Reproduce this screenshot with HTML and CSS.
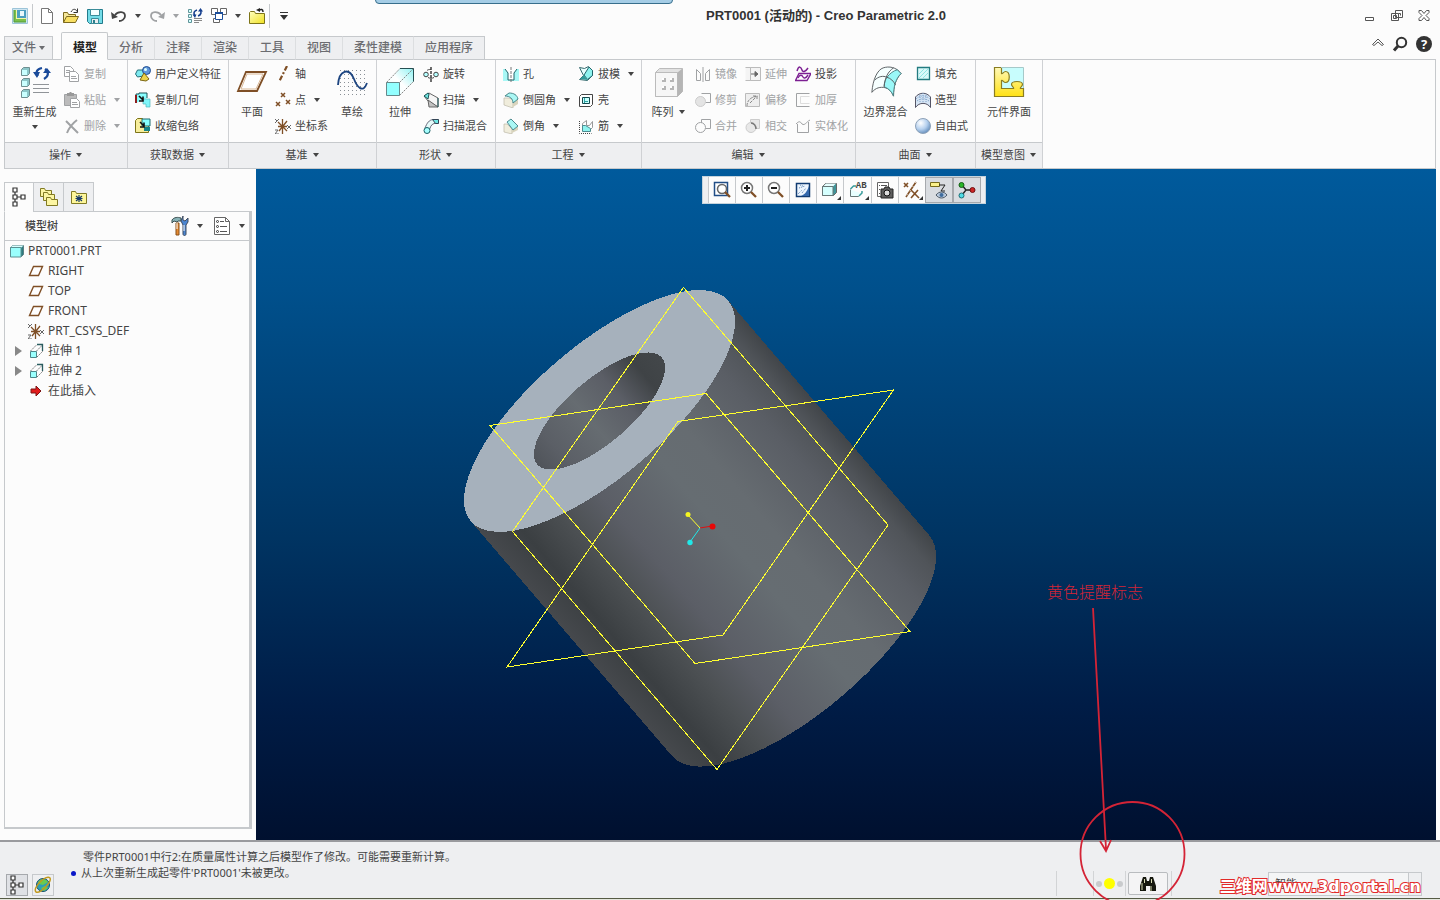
FILE: index.html
```html
<!DOCTYPE html>
<html lang="zh-CN">
<head>
<meta charset="utf-8">
<title>PRT0001 (活动的) - Creo Parametric 2.0</title>
<link rel="stylesheet" href="styles.css">
</head>
<body>
<svg class="sprite" aria-hidden="true">
  <defs>
    <linearGradient id="gFolder" x1="0" y1="0" x2="1" y2="1"><stop offset="0" stop-color="#ffffc0"/><stop offset="1" stop-color="#f0e020"/></linearGradient>
    <linearGradient id="gPuzzle" x1="0" y1="0" x2="0" y2="1"><stop offset="0" stop-color="#fff9b8"/><stop offset="1" stop-color="#ffe114"/></linearGradient>
    <linearGradient id="gFace" x1="0" y1="1" x2="1" y2="0"><stop offset="0" stop-color="#e6ffff"/><stop offset=".5" stop-color="#fff"/><stop offset="1" stop-color="#8ff3f3"/></linearGradient>
    <radialGradient id="gBall" cx=".35" cy=".3" r=".7"><stop offset="0" stop-color="#fff"/><stop offset=".6" stop-color="#b5d0ee"/><stop offset="1" stop-color="#6e96c2"/></radialGradient>
    <pattern id="dots" width="4" height="4" patternUnits="userSpaceOnUse"><rect width="1" height="1" fill="#8a9096"/></pattern>
  </defs>
  <symbol id="caret" viewBox="0 0 8 6"><path d="M1 1h6L4 5z" fill="currentColor"/></symbol>
  <symbol id="app" viewBox="0 0 16 16"><path d="M.5.5h15v15H.5z" fill="#cfe6f2" stroke="#9cc4d8"/><path d="M2 2h12v12H2z" fill="#7cc04a"/><path d="M4 2h10v9H4z" fill="#f2f5a8"/><path d="M5 2h9v8H5z" fill="#4a9fc0"/><path d="M8 3h4v5H8z" fill="#e8f8fc"/><path d="M2 2v12h12" fill="none" stroke="#4e9b3a"/></symbol>
  <symbol id="new" viewBox="0 0 16 16"><path d="M2.500.5h7l4 4v11h-11z" fill="#fff" stroke="#777"/><path d="M9.500.5v4h4" fill="none" stroke="#777"/></symbol>
  <symbol id="open" viewBox="0 0 16 16"><path d="M.5 14.500v-10h4l1 2h7v3" fill="#f5e79a" stroke="#7d6a1f"/><path d="M.5 14.500l3-6h12l-3 6z" fill="#f8df63" stroke="#7d6a1f"/><path d="M8 4c2-4 5-3 6-.500M14.500.5v4h-4" fill="none" stroke="#333"/></symbol>
  <symbol id="save" viewBox="0 0 16 16"><path d="M.5 1.500h15v14H2.500l-2-2z" fill="#74dce8" stroke="#217b8c"/><path d="M3.500 1.500h9v6h-9z" fill="#f5ffff" stroke="#3b8c99"/><path d="M4.500 10.500h7v5h-7z" fill="#e9eef0" stroke="#3b8c99"/><path d="M6 12h2v3H6z" fill="#2d7f8e"/></symbol>
  <symbol id="undo" viewBox="0 0 16 16"><path d="M4 7C7 3 14 3 14 8c0 3-3 5-6 5" fill="none" stroke="currentColor" stroke-width="1.800"/><path d="M0 4l1 7 6-2z" fill="currentColor"/></symbol>
  <symbol id="redo" viewBox="0 0 16 16"><path d="M12 7C9 3 2 3 2 8c0 3 3 5 6 5" fill="none" stroke="currentColor" stroke-width="1.800"/><path d="M16 4l-1 7-6-2z" fill="currentColor"/></symbol>
  <symbol id="regen" viewBox="0 0 16 16"><g fill="#d5ffff" stroke="#5f9499"><path d="M1.500 1.500h3v3h-3zM1.500 6.500h3v3h-3zM1.500 11.500h3v3h-3z"/></g><path d="M8 8c-2-3-1-5 2-6M13 2c2 2 1 5-2 6" fill="none" stroke="#17408f" stroke-width="1.600"/><path d="M5.500 6.500h4L8 10zM11 3.500h5L13.500 0z" fill="#17408f"/><path d="M7 10.500h8M7 12.500h8M7 14.500h5" stroke="#888"/></symbol>
  <symbol id="windows" viewBox="0 0 16 16"><g fill="#fff" stroke="#666"><path d="M.5.5h6v6h-6zM9.500.5h6v6h-6zM2.500 10.500h6v4h-6z"/></g><path d="M4.500 4.500h7v7h-7z" fill="#fff" stroke="#1b4d9a"/><path d="M4 4h8v2H4z" fill="#1b4d9a"/></symbol>
  <symbol id="folderback" viewBox="0 0 16 16"><path d="M.5 15.500v-11l1-1h4l1 2h9v10z" fill="url(#gFolder)" stroke="#7d7418"/><path d="M14 4c0-3-2-3-4-2" fill="none" stroke="#222" stroke-width="1.500"/><path d="M7 2l4-2v4z" fill="#222"/></symbol>
  <symbol id="more" viewBox="0 0 10 10"><path d="M1 1.500h8" stroke="#333"/><path d="M1 4h8L5 9z" fill="#333"/></symbol>

  <symbol id="regenBig" viewBox="0 0 32 32"><g id="cubes"><path d="M2.500 3.500l2-2h6v6l-2 2h-6z" fill="#8cc7c9" stroke="#6f8f91"/><path d="M3 4h5v5H3z" fill="#c9ffff"/></g><use href="#cubes" y="11"/><use href="#cubes" y="22"/><path d="M19 10c-3-4-1-7 4-8M26 3c4 3 4 7-1 10" fill="none" stroke="#1a4a99" stroke-width="2.200"/><path d="M14 6h7l-3 6zM24 7h8l-4-5z" fill="#1a4a99"/><path d="M14 18.500h16M14 22.500h16M14 26.500h16" stroke="#909498"/></symbol>
  <symbol id="copy" viewBox="0 0 16 16"><g fill="#fff" stroke="currentColor"><path d="M.5.500h6l3 3v7h-9z"/><path d="M5.500 5.500h6l3 3v7h-9z"/></g><path d="M2 4.500h4M2 6.500h3M7 10.500h5M7 12.500h6" stroke="currentColor"/></symbol>
  <symbol id="paste" viewBox="0 0 16 16"><path d="M.5 2.500h12v11H.5z" fill="#bbb" stroke="currentColor"/><path d="M3 1h2l1-1h1l1 1h2v3H3z" fill="#999"/><path d="M6.500 6.500h6l3 3v6h-9z" fill="#fff" stroke="currentColor"/><path d="M8 10.500h5M8 12.500h6" stroke="currentColor"/></symbol>
  <symbol id="delete" viewBox="0 0 16 16"><path d="M2 3l12 12M13 2C9 5 5 10 3 15" fill="none" stroke="currentColor" stroke-width="2"/></symbol>
  <symbol id="udf" viewBox="0 0 16 16"><path d="M.5 8l2-4h6l3 3-3 3-6 1z" fill="#7eeaf0" stroke="#236c77"/><circle cx="11.500" cy="4.500" r="4" fill="#5f97dc" stroke="#214e90"/><path d="M5 14l4-7 5 6-3 2z" fill="#ecd34a" stroke="#7a6613"/><circle cx="10.500" cy="3.500" r="1.500" fill="#dff"/></symbol>
  <symbol id="copygeom" viewBox="0 0 16 16"><path d="M1 11V2h3V1h8v5" fill="#8ff" stroke="#1f5558"/><path d="M1 3v8" stroke="#8e1d1d" stroke-width="2"/><path d="M8 7h7v8h-4v-3H8z" fill="#7ff6fa" stroke="#55b8bb" stroke-width=".7"/><path d="M4 4l4 4M8 4.500V9H4" fill="none" stroke="#111" stroke-width="1.600"/></symbol>
  <symbol id="shrink" viewBox="0 0 16 16"><path d="M.5 14.500v-12l2-2h5v6h6v8z" fill="#f7ee9b" stroke="#7d7418"/><path d="M7 1h8v7H7z" fill="#8ff" stroke="#1f6c70"/><path d="M9 9h6v4H9z" fill="#17848a"/><path d="M5 4l4 4M9 4.500V9H5" fill="none" stroke="#111" stroke-width="1.600"/></symbol>
  <symbol id="planeBig" viewBox="0 0 32 32"><path d="M10 6h20l-9 19H2z" fill="#fff" stroke="#7f4f26" stroke-width="1.800"/><path d="M11 8h16l-7 15H5z" fill="none" stroke="#d9b896"/></symbol>
  <symbol id="axis" viewBox="0 0 16 16"><path d="M12 0L4 16" stroke="#7f4f26" stroke-width="2.200" stroke-dasharray="5 2 2 2"/></symbol>
  <symbol id="points" viewBox="0 0 16 16"><path id="x" d="M6 1l4 4M10 1L6 5" stroke="#7f4f26" stroke-width="1.500"/><use href="#x" x="-5" y="9"/><use href="#x" x="5" y="7"/></symbol>
  <symbol id="csys" viewBox="0 0 16 16"><path d="M7.500 1v15M3 4l9 9M12 3l-8 10M3 8.500h9" stroke="#7f4f26" stroke-width="1.300"/><path d="M0 1l2 2 2-2M2 3L0 5M0 12h3l-3 4h4M12 7l4 4M16 7l-4 4" fill="none" stroke="#666"/></symbol>
  <symbol id="sketchBig" viewBox="0 0 32 32"><rect x="2" y="2" width="29" height="29" fill="url(#dots)"/><path d="M2 19C3 4 13 1 18 13c3 8 9 15 13 4" fill="none" stroke="#1c4480" stroke-width="1.800"/></symbol>
  <symbol id="extrudeBig" viewBox="0 0 32 32"><path d="M2.500 16.500L16 2.500h13.500v13l-14 14z" fill="url(#gFace)"/><path d="M2.500 16.500h13v13h-13z" fill="#92ffff" stroke="#66898b"/><path d="M2.500 16.500L16 2.500M15.500 16.500l14-14M15.500 29.500l14-14" stroke="#888" stroke-dasharray="2 1"/><path d="M16 2.500h13.500v13" fill="none" stroke="#254f52"/></symbol>
  <symbol id="revolve" viewBox="0 0 16 16"><path d="M8 1v15" stroke="#222" stroke-width="1.300" stroke-dasharray="3 1"/><circle cx="3" cy="8.500" r="2.300" fill="#b5ffff" stroke="#444"/><circle cx="13" cy="8.500" r="2.300" fill="#b5ffff" stroke="#444"/><path d="M4 4.500c1-1 2-1 4-1M5 11.500c2 1 4 1 6 0" fill="none" stroke="#444"/></symbol>
  <symbol id="sweep" viewBox="0 0 16 16"><path d="M1 4l4 5 10 6V6L6 1z" fill="#f5f5f5" stroke="#666"/><path d="M1 4l4-3 1 1-1 5z" fill="#6fe5e0" stroke="#1d5558"/><path d="M5 8l10 7H6z" fill="#c2c2c2" stroke="#666"/><path d="M15 6v9" stroke="#1d5558"/></symbol>
  <symbol id="sweepblend" viewBox="0 0 16 16"><path d="M2 10C4 5 6 2 10 1.500h5v4h-4c-3 1-4 4-5 8z" fill="#e6fbfa" stroke="#667"/><path d="M9.500 1.500h6v4h-3z" fill="#6fe9e5" stroke="#345"/><circle cx="4" cy="12.500" r="3" fill="#a6ffff" stroke="#175d63"/></symbol>
  <symbol id="hole" viewBox="0 0 16 16"><path d="M0 3h4l1 4v7h6V7l1-4h4v12H0z" fill="#a8f8f6"/><path d="M2 3l3 4v7h6V7l3-4" fill="#fff" stroke="#23646a"/><path d="M8 1v15" stroke="#777" stroke-dasharray="3 1"/></symbol>
  <symbol id="round" viewBox="0 0 16 16"><path d="M1 6v7l9 3v-6c0-3-2-4-5-4z" fill="#f0eddc" stroke="#bbb8a8" stroke-width=".7"/><path d="M10 15l5-3V7c-1-4-4-6-9-6L1 4c5 0 9 2 9 7z" fill="#d9d4bd"/><path d="M2 4l4-3c5 0 8 2 9 6l-5 4c0-4-3-7-8-7z" fill="#a9f7f4" stroke="#4c8a8f"/></symbol>
  <symbol id="chamfer" viewBox="0 0 16 16"><path d="M1 6v8l8 2v-5L4 6z" fill="#f0eddc" stroke="#bbb8a8" stroke-width=".7"/><path d="M9 15l6-3V8l-6 3z" fill="#d9d4bd"/><path d="M4 4l4-3 7 7-5 4z" fill="#a9f7f4" stroke="#4c8a8f"/></symbol>
  <symbol id="draft" viewBox="0 0 16 16"><path d="M1.500 1.500l5 1 4-2 4 4v5l-5 5-8-1 4-4z" fill="#e9ffff" stroke="#356a6e"/><path d="M6 9l5-8 3.500 3.500v5l-5 4z" fill="#8ef3ef" stroke="#23646a"/><path d="M2 13l4-4 3.500 5z" fill="#319c9a"/></symbol>
  <symbol id="shell" viewBox="0 0 16 16"><path d="M1.500 4.500l2-2h11v10l-2 2h-11z" fill="#fff" stroke="#444"/><path d="M4.500 5.500h7v6h-7z" fill="#c7fffc" stroke="#14494d"/><path d="M6 9.500h4M6.500 6v5" stroke="#2fa5a5"/></symbol>
  <symbol id="rib" viewBox="0 0 16 16"><path d="M4.500 12.500v-7l4-3v5h3l3-4v6l-4 4z" fill="#fff" stroke="#999"/><path d="M4.500 7.500h3l5 3v3h-8z" fill="#8ef3ef" stroke="#4c8a8f"/><path d="M1.500 3v12.500h12" fill="none" stroke="#444" stroke-dasharray="1 1"/></symbol>
  <symbol id="patternBig" viewBox="0 0 32 32"><path d="M2.500 6.500l4-4h23v23l-5 5h-22z" fill="#e2e2e2" stroke="#bbb"/><path d="M2.500 6.500h22v24h-22z" fill="#f6f6f6" stroke="#bbb"/><path d="M24.500 6.500l5-4v23l-5 5z" fill="#b5b5b5"/><path d="M9 12h4v4H9zM17 12h4v4h-4zM9 20h4v4H9zM17 20h4v4h-4z" fill="#b5b5b5"/><path d="M9 12h2v2H9zM17 12h2v2h-2zM9 20h2v2H9zM17 20h2v2h-2z" fill="#fff"/></symbol>
  <symbol id="mirror" viewBox="0 0 16 16"><path d="M8 1v15" stroke="currentColor"/><path d="M1.500 14.500v-11l4 4v7zM14.500 14.500v-11l-4 4v7z" fill="none" stroke="currentColor"/></symbol>
  <symbol id="trim" viewBox="0 0 16 16"><path d="M6.500 1.500h9v9h-5" fill="none" stroke="currentColor"/><circle cx="5.500" cy="9.500" r="5" fill="#e4e4e4" stroke="#ccc"/></symbol>
  <symbol id="merge" viewBox="0 0 16 16"><path d="M6.500 5v-3.500h9v9h-5" fill="none" stroke="currentColor"/><circle cx="5.500" cy="9.500" r="5" fill="none" stroke="currentColor"/></symbol>
  <symbol id="extend" viewBox="0 0 16 16"><path d="M.5 1.500h5v13h-5M5.500 1.500h10v13h-10z" fill="#f4f4f4" stroke="#bbb"/><path d="M6 8h6M10 5.500l3 2.500-3 2.500z" fill="#666" stroke="#666"/></symbol>
  <symbol id="offset" viewBox="0 0 16 16"><path d="M.5 1.500h14v13H.5z" fill="#eee" stroke="#bbb"/><path d="M2 14c0-5 3-9 11-10M5 11l6-6M8 4h4v4" fill="none" stroke="#888" stroke-dasharray="3 1"/></symbol>
  <symbol id="intersect" viewBox="0 0 16 16"><path d="M5.500 1.500h9v9h-9z" fill="#e8e8e8" stroke="#ccc"/><circle cx="6" cy="9.500" r="5" fill="#e8e8e8" stroke="#ccc"/><path d="M6 5c3 0 5 3 5 6" fill="none" stroke="#777" stroke-width="1.500"/></symbol>
  <symbol id="project" viewBox="0 0 16 16"><path d="M2 5c2-6 4-4 5-1s4 1 6-2" fill="none" stroke="#7c1f92" stroke-width="1.500"/><path d="M4 7.500h12l-4 7H.5z" fill="#fff" stroke="#7c1f92" stroke-width="1.400"/><path d="M3 12c2-4 4-3 5-1s3 1 5-2" fill="none" stroke="#7c1f92" stroke-width="1.400"/></symbol>
  <symbol id="thicken" viewBox="0 0 16 16"><path d="M14.500 1.500h-13v13h13" fill="none" stroke="currentColor"/><path d="M14.500 4.500h-9v7h9" fill="none" stroke="#ddd"/></symbol>
  <symbol id="solidify" viewBox="0 0 16 16"><path d="M1 6c3-3 4-3 6 0 3 2 4-2 8-4M2.500 6v8.500h11V4" fill="none" stroke="currentColor"/></symbol>
  <symbol id="boundaryBig" viewBox="0 0 34 34"><path d="M2 28C3 14 8 4 14 2c6-2 14-1 19 6-6 6-8 14-8 24-2-5-5-8-9-9-5-1-10 0-14 5z" fill="#f6ffff" stroke="#555b5e"/><path d="M18 12c3-4 7-7 11-8l4 4c-6 6-8 14-8 24-2-5-5-8-10-10 0-4 1-7 3-10z" fill="#9af8f8" stroke="#4b7f82"/><path d="M5 15c4-4 9-5 13-3 4 1 7 4 9 8M15 22C16 12 19 6 25 2" fill="none" stroke="#555b5e"/></symbol>
  <symbol id="fill" viewBox="0 0 16 16"><path d="M2.500 1.500h12v12h-12z" fill="#d9fafa" stroke="#237b80" stroke-width="1.300"/><path d="M4 12l9-9M4 8l5-5M8 12l5-5" stroke="#8fe5e4"/></symbol>
  <symbol id="style" viewBox="0 0 16 16"><path d="M.5 15.500V5c4-5 11-5 15 0v10.500C12 10 4 10 .5 15.500z" fill="#d5e4f4" stroke="#556"/><path d="M1 7c4-4 10-4 14 0M2 9c4-3 8-3 12 0M5 3v8M8 1v9M11 3v8" fill="none" stroke="#7fa2c8" stroke-dasharray="1 1"/></symbol>
  <symbol id="ball" viewBox="0 0 16 16"><circle cx="8" cy="8" r="7.500" fill="url(#gBall)" stroke="#8ea2b8"/></symbol>
  <symbol id="puzzleBig" viewBox="0 0 32 32"><path d="M1.500 1.500h29v29h-29z" fill="#c8fdfd"/><path d="M1.500 1.500h7v6c1 1 2-2 4-2 5 0 5 11 0 11-2 0-3-3-4-2v8h12c1-1-2-2-2-4 0-4 11-4 11 0 0 2-3 3-2 4h3v8h-29z" fill="url(#gPuzzle)" stroke="#8a7d22" stroke-width="1.200"/><path d="M8 1.500h22.500V22" fill="none" stroke="#a6c9c9"/></symbol>

  <symbol id="tree" viewBox="0 0 16 20"><g fill="#fff" stroke="currentColor" stroke-width="1.200"><path d="M4 3v14M4 10h7"/><path d="M2 1h4v4H2zM2 8h4v4H2zM2 15h4v4H2zM10 8h4v4h-4z"/></g></symbol>
  <symbol id="folders" viewBox="0 0 20 20"><g id="fd"><path d="M1.500 9.500v-8h4l1 2h6v6z" fill="#fdf6a3" stroke="#817a24"/></g><use href="#fd" x="3" y="4"/><use href="#fd" x="6" y="9"/></symbol>
  <symbol id="folderstar" viewBox="0 0 18 18"><path d="M1.500 15.500v-12h4l1 2h10v10z" fill="#fdf69a" stroke="#817a24"/><path d="M9 7v7M6 8l6 5M12 8l-6 5M5.500 10.500h7" stroke="#173a68" stroke-width="1.200"/></symbol>
  <symbol id="tools" viewBox="0 0 18 20"><path d="M1 4c2-3 6-3 9-2v3H7l-1 1-3-1-2 2z" fill="#87b2b6" stroke="#3b5153"/><path d="M5 7h3v12H5z" fill="#e58a32" stroke="#88501b"/><path d="M12 0v4l2 1 3-3v4l-2 3v9c0 2-3 2-3 0V9l-2-4z" fill="#4b85d1" stroke="#404c60"/><path d="M6 7v6M13 9v6" stroke="#fff"/></symbol>
  <symbol id="listdoc" viewBox="0 0 18 20"><path d="M1.500 1.500h11l4 4v13h-15z" fill="#fff" stroke="#666"/><path d="M12.500 1.500v4h4" fill="none" stroke="#666"/><g fill="#fff" stroke="#333"><circle cx="4.500" cy="5.500" r="1"/><circle cx="4.500" cy="10.500" r="1"/><circle cx="4.500" cy="15.500" r="1"/></g><path d="M7 5.500h4M7 10.500h7M7 15.500h7" stroke="#555"/></symbol>
  <symbol id="part" viewBox="0 0 14 14"><path d="M.5 3.500l2-2h11v9l-2 2H.5z" fill="#2d7c80" stroke="#5c8083"/><path d="M.5 3.500l2-2h11l-2 2z" fill="#d8ffff"/><path d="M.5 3.500h10.500v9.500H.5z" fill="#9afffd" stroke="#5c9092"/></symbol>
  <symbol id="plane" viewBox="0 0 16 12"><path d="M5.500 1.500h9l-4 9h-9z" fill="#fff" stroke="#7f4f26" stroke-width="1.400"/></symbol>
  <symbol id="extrude" viewBox="0 0 16 16"><path d="M2.500 8.500h6v6h-6z" fill="#9afffd" stroke="#4c8689"/><path d="M2.500 8l6-6M8.500 8l6-6M9 14l6-6" stroke="#777" stroke-dasharray="2 1"/><path d="M9 1.500h5.500V8" fill="none" stroke="#2b5d60" stroke-width="1.300"/></symbol>
  <symbol id="redarrow" viewBox="0 0 12 12"><path d="M1 4h5V1l5 5-5 5V8H1z" fill="#e11c1c" stroke="#7d1414"/></symbol>

  <symbol id="zoomfit" viewBox="0 0 18 18"><path d="M1.500 1.500h13v13h-13z" fill="#fff" stroke="#224e86" stroke-width="1.500"/><circle cx="9" cy="8" r="4.500" fill="#fff" stroke="#666" stroke-width="1.500"/><path d="M12 11l5 5" stroke="#7f4f26" stroke-width="2.300"/></symbol>
  <symbol id="zoomin" viewBox="0 0 18 18"><circle cx="7" cy="7" r="5.500" fill="#fff" stroke="#777" stroke-width="1.500"/><path d="M4 7h6M7 4v6" stroke="#222" stroke-width="2"/><path d="M11 11l5 5" stroke="#7f4f26" stroke-width="2.300"/></symbol>
  <symbol id="zoomout" viewBox="0 0 18 18"><circle cx="7" cy="7" r="5.500" fill="#fff" stroke="#777" stroke-width="1.500"/><path d="M4 7h6" stroke="#222" stroke-width="2"/><path d="M11 11l5 5" stroke="#7f4f26" stroke-width="2.300"/></symbol>
  <symbol id="repaint" viewBox="0 0 18 18"><path d="M2.500 2.500h13v13h-13z" fill="#eef6ff" stroke="#123c72" stroke-width="1.500"/><path d="M4 13l4-4M5 7l6-2M8 12l4-5M6 4l3 1" fill="none" stroke="#5f86b5" stroke-dasharray="1 1"/><path d="M15 5v10H7c3-1 6-4 8-10z" fill="#3468ac"/></symbol>
  <symbol id="shade" viewBox="0 0 18 18"><path d="M1.500 5.500l3-3h11v9l-3 3h-11z" fill="#3f9599" stroke="#666"/><path d="M2 5.500l3-3h10l-3 3z" fill="#e8ffff"/><path d="M1.500 5.500h10.500v9h-10.500z" fill="#d5fffe" stroke="#677"/></symbol>
  <symbol id="views" viewBox="0 0 18 18"><path d="M1.500 8.500v7h8l3-3" fill="#e8ffff" stroke="#677"/><path d="M1.500 8l3-3H7M10 15l3-3v-2" fill="none" stroke="#3a9b9b" stroke-width="1.500"/></symbol>
  <symbol id="camera" viewBox="0 0 18 18"><path d="M1.500 1.500h11v14h-11z" fill="#fff" stroke="#666"/><path d="M3 4.500h1M5 4.500h6M3 8.500h1M3 12.500h1" stroke="#555"/><path d="M5 8h3l1-2h4l1 2h3v9H5z" fill="#5e5e5e" stroke="#222"/><circle cx="11" cy="12" r="3" fill="#ddd" stroke="#111"/></symbol>
  <symbol id="datums" viewBox="0 0 18 18"><path d="M1 2l4 4M5 2L1 6M13 1L3 16M8 9l8 8M15 9l-7 8" stroke="#7f4f26" stroke-width="1.600"/><path d="M13 1L3 16" stroke="#fff" stroke-dasharray="1 4"/></symbol>
  <symbol id="notes" viewBox="0 0 18 18"><path d="M.5 1.500h9v4h-9z" fill="#fbf18a" stroke="#776b1a"/><path d="M9 4h6l-4 6h4" fill="none" stroke="#222"/><path d="M6 14c3-4 8-4 11 0-3 4-8 4-11 0z" fill="#b9c9dc" stroke="#4c5966"/><circle cx="11.500" cy="14" r="2" fill="#3f6c9d"/></symbol>
  <symbol id="spin" viewBox="0 0 18 18"><path d="M4 4l4 5-4 5M8 9h7" fill="none" stroke="#222" stroke-width="1.400"/><circle cx="3.500" cy="4" r="2.500" fill="#28b628" stroke="#155c15"/><circle cx="14.500" cy="9" r="2.500" fill="#cc2525" stroke="#701313"/><circle cx="3.500" cy="14.500" r="2.500" fill="#4fdce5" stroke="#1b6d75"/></symbol>
  <symbol id="globe" viewBox="0 0 18 18"><circle cx="9" cy="9" r="6.500" fill="#2d9fb8" stroke="#164e6a"/><path d="M4 6c3-4 8-3 10 0l-5 3-4-1zM7 12l4-2 3 2-4 3z" fill="#6cc94e"/><path d="M2 16C-2 12 12-2 16 2c2 4-10 16-14 14z" fill="none" stroke="#c29a1d" stroke-width="1.500"/></symbol>
  <symbol id="binoc" viewBox="0 0 16 16"><path d="M2 4l1-3h3l1 4h2l1-4h3l1 3 2 6v5h-6v-5H6v5H0v-5z" fill="#16180f"/><path d="M2 7v7M4.500 3v4M11.500 3v4M11 10v5" stroke="#d8dcb4"/></symbol>
</svg>

<div class="app">
  <header class="titlebar">
    <div class="backdrop-window"></div>
    <nav class="quick" aria-label="快速访问">
      <button class="qbtn" aria-label="应用"><svg class="i16"><use href="#app"/></svg></button>
      <span class="qsep"></span>
      <button class="qbtn" aria-label="新建"><svg class="i16"><use href="#new"/></svg></button>
      <button class="qbtn" aria-label="打开"><svg class="i16"><use href="#open"/></svg></button>
      <button class="qbtn" aria-label="保存"><svg class="i16"><use href="#save"/></svg></button>
      <button class="qbtn" aria-label="撤消"><svg class="i16"><use href="#undo"/></svg></button>
      <button class="qdrop" aria-label="撤消列表"><svg class="caret"><use href="#caret"/></svg></button>
      <button class="qbtn off" aria-label="重做"><svg class="i16"><use href="#redo"/></svg></button>
      <button class="qdrop off" aria-label="重做列表"><svg class="caret"><use href="#caret"/></svg></button>
      <button class="qbtn" aria-label="重新生成"><svg class="i16"><use href="#regen"/></svg></button>
      <button class="qbtn" aria-label="窗口"><svg class="i16"><use href="#windows"/></svg></button>
      <button class="qdrop" aria-label="窗口列表"><svg class="caret"><use href="#caret"/></svg></button>
      <button class="qbtn" aria-label="关闭"><svg class="i16"><use href="#folderback"/></svg></button>
      <span class="qsep"></span>
      <button class="qbtn" aria-label="自定义"><svg class="i10"><use href="#more"/></svg></button>
    </nav>
    <h1 class="title">PRT0001 (活动的) - Creo Parametric 2.0</h1>
    <div class="wincontrols">
      <button aria-label="最小化"><svg viewBox="0 0 12 12" class="i12"><path d="M1.500 7.500h8v3h-8z" fill="#fff" stroke="#555"/></svg></button>
      <button aria-label="还原"><svg viewBox="0 0 12 12" class="i12"><path d="M4.500.5h7v7h-7zM.5 3.500h7v7h-7z" fill="#fff" stroke="#555"/><path d="M2.500 5.500h3v3h-3zM7.500 3.500h2v2" fill="none" stroke="#555"/></svg></button>
      <button aria-label="关闭窗口"><svg viewBox="0 0 12 12" class="i12"><path d="M1 .5h2.500L6 3.500 8.500.5H11v2L8 5.500l3 3v2H8.500L6 7.500l-2.500 3H1v-2l3-3-3-3z" fill="#fff" stroke="#555"/></svg></button>
    </div>
  </header>

  <div class="tabbar">
    <button class="filetab">文件<svg class="caret"><use href="#caret"/></svg></button>
    <div class="tabs" role="tablist">
      <button class="tab active" role="tab" aria-selected="true">模型</button>
      <button class="tab" role="tab">分析</button>
      <button class="tab" role="tab">注释</button>
      <button class="tab" role="tab">渲染</button>
      <button class="tab" role="tab">工具</button>
      <button class="tab" role="tab">视图</button>
      <button class="tab" role="tab">柔性建模</button>
      <button class="tab" role="tab">应用程序</button>
    </div>
    <div class="helpers">
      <button aria-label="最小化功能区"><svg viewBox="0 0 12 12" class="i12"><path d="M.5 6.500L6 1l5.500 5.500-1.500 1L6 4 2 7.500z" fill="#fff" stroke="#555"/></svg></button>
      <button aria-label="搜索"><svg viewBox="0 0 16 16" class="i16"><circle cx="9.500" cy="6.500" r="4.700" fill="none" stroke="#333" stroke-width="2"/><path d="M6 10l-4 4.500" stroke="#333" stroke-width="3"/></svg></button>
      <button class="help" aria-label="帮助">?</button>
    </div>
  </div>

  <section class="ribbon" aria-label="功能区">
    <div class="group g-ops">
      <div class="gbody">
        <button class="big"><svg class="i32"><use href="#regenBig"/></svg><span>重新生成</span><svg class="caret"><use href="#caret"/></svg></button>
        <div class="col">
          <button class="small off"><svg class="i16"><use href="#copy"/></svg>复制</button>
          <button class="small off"><svg class="i16"><use href="#paste"/></svg>粘贴<svg class="caret"><use href="#caret"/></svg></button>
          <button class="small off"><svg class="i16"><use href="#delete"/></svg>删除<svg class="caret"><use href="#caret"/></svg></button>
        </div>
      </div>
      <button class="gname">操作<svg class="caret"><use href="#caret"/></svg></button>
    </div>
    <div class="group g-data">
      <div class="gbody lead">
        <div class="col">
          <button class="small"><svg class="i16"><use href="#udf"/></svg>用户定义特征</button>
          <button class="small"><svg class="i16"><use href="#copygeom"/></svg>复制几何</button>
          <button class="small"><svg class="i16"><use href="#shrink"/></svg>收缩包络</button>
        </div>
      </div>
      <button class="gname">获取数据<svg class="caret"><use href="#caret"/></svg></button>
    </div>
    <div class="group g-datum">
      <div class="gbody">
        <button class="big narrow"><svg class="i32"><use href="#planeBig"/></svg><span>平面</span></button>
        <div class="col c54">
          <button class="small"><svg class="i16"><use href="#axis"/></svg>轴</button>
          <button class="small"><svg class="i16"><use href="#points"/></svg>点<svg class="caret"><use href="#caret"/></svg></button>
          <button class="small"><svg class="i16"><use href="#csys"/></svg>坐标系</button>
        </div>
        <button class="big narrow"><svg class="i32"><use href="#sketchBig"/></svg><span>草绘</span></button>
      </div>
      <button class="gname">基准<svg class="caret"><use href="#caret"/></svg></button>
    </div>
    <div class="group g-shape">
      <div class="gbody">
        <button class="big narrow"><svg class="i32"><use href="#extrudeBig"/></svg><span>拉伸</span></button>
        <div class="col">
          <button class="small"><svg class="i16"><use href="#revolve"/></svg>旋转</button>
          <button class="small"><svg class="i16"><use href="#sweep"/></svg>扫描<svg class="caret"><use href="#caret"/></svg></button>
          <button class="small"><svg class="i16"><use href="#sweepblend"/></svg>扫描混合</button>
        </div>
      </div>
      <button class="gname">形状<svg class="caret"><use href="#caret"/></svg></button>
    </div>
    <div class="group g-eng">
      <div class="gbody lead">
        <div class="col c75">
          <button class="small"><svg class="i16"><use href="#hole"/></svg>孔</button>
          <button class="small"><svg class="i16"><use href="#round"/></svg>倒圆角<svg class="caret"><use href="#caret"/></svg></button>
          <button class="small"><svg class="i16"><use href="#chamfer"/></svg>倒角<svg class="caret"><use href="#caret"/></svg></button>
        </div>
        <div class="col">
          <button class="small"><svg class="i16"><use href="#draft"/></svg>拔模<svg class="caret"><use href="#caret"/></svg></button>
          <button class="small"><svg class="i16"><use href="#shell"/></svg>壳</button>
          <button class="small"><svg class="i16"><use href="#rib"/></svg>筋<svg class="caret"><use href="#caret"/></svg></button>
        </div>
      </div>
      <button class="gname">工程<svg class="caret"><use href="#caret"/></svg></button>
    </div>
    <div class="group g-edit">
      <div class="gbody">
        <button class="big mid"><svg class="i32"><use href="#patternBig"/></svg><span>阵列<svg class="caret"><use href="#caret"/></svg></span></button>
        <div class="col c50">
          <button class="small off"><svg class="i16"><use href="#mirror"/></svg>镜像</button>
          <button class="small off"><svg class="i16"><use href="#trim"/></svg>修剪</button>
          <button class="small off"><svg class="i16"><use href="#merge"/></svg>合并</button>
        </div>
        <div class="col c50">
          <button class="small off"><svg class="i16"><use href="#extend"/></svg>延伸</button>
          <button class="small off"><svg class="i16"><use href="#offset"/></svg>偏移</button>
          <button class="small off"><svg class="i16"><use href="#intersect"/></svg>相交</button>
        </div>
        <div class="col">
          <button class="small"><svg class="i16"><use href="#project"/></svg>投影</button>
          <button class="small off"><svg class="i16"><use href="#thicken"/></svg>加厚</button>
          <button class="small off"><svg class="i16"><use href="#solidify"/></svg>实体化</button>
        </div>
      </div>
      <button class="gname">编辑<svg class="caret"><use href="#caret"/></svg></button>
    </div>
    <div class="group g-surf">
      <div class="gbody">
        <button class="big"><svg class="i32"><use href="#boundaryBig"/></svg><span>边界混合</span></button>
        <div class="col">
          <button class="small"><svg class="i16"><use href="#fill"/></svg>填充</button>
          <button class="small"><svg class="i16"><use href="#style"/></svg>造型</button>
          <button class="small"><svg class="i16"><use href="#ball"/></svg>自由式</button>
        </div>
      </div>
      <button class="gname">曲面<svg class="caret"><use href="#caret"/></svg></button>
    </div>
    <div class="group g-intent">
      <div class="gbody center">
        <button class="big"><svg class="i32"><use href="#puzzleBig"/></svg><span>元件界面</span></button>
      </div>
      <button class="gname">模型意图<svg class="caret"><use href="#caret"/></svg></button>
    </div>
  </section>

  <main class="work">
    <aside class="side">
      <div class="sidetabs" role="tablist">
        <button class="stab active" role="tab" aria-label="模型树"><svg class="treeicon"><use href="#tree"/></svg></button>
        <button class="stab" role="tab" aria-label="文件夹浏览器"><svg class="i20"><use href="#folders"/></svg></button>
        <button class="stab" role="tab" aria-label="收藏夹"><svg class="i18"><use href="#folderstar"/></svg></button>
      </div>
      <div class="panel">
        <div class="panelhead">
          <h2>模型树</h2>
          <button aria-label="设置"><svg class="i20"><use href="#tools"/></svg><svg class="caret"><use href="#caret"/></svg></button>
          <button aria-label="显示"><svg class="i20"><use href="#listdoc"/></svg><svg class="caret"><use href="#caret"/></svg></button>
        </div>
        <ul class="modeltree">
          <li class="root"><svg class="i14"><use href="#part"/></svg>PRT0001.PRT</li>
          <li><span class="twist"></span><svg class="i16"><use href="#plane"/></svg>RIGHT</li>
          <li><span class="twist"></span><svg class="i16"><use href="#plane"/></svg>TOP</li>
          <li><span class="twist"></span><svg class="i16"><use href="#plane"/></svg>FRONT</li>
          <li><span class="twist"></span><svg class="i16"><use href="#csys"/></svg>PRT_CSYS_DEF</li>
          <li><span class="twist closed"></span><svg class="i16"><use href="#extrude"/></svg>拉伸 1</li>
          <li><span class="twist closed"></span><svg class="i16"><use href="#extrude"/></svg>拉伸 2</li>
          <li><span class="twist"></span><svg class="i16 pad"><use href="#redarrow"/></svg>在此插入</li>
        </ul>
      </div>
    </aside>

    <section class="viewport" aria-label="图形窗口">
      <div class="viewtools">
        <div class="vbar">
          <button aria-label="重新调整"><svg class="i18"><use href="#zoomfit"/></svg></button>
          <button aria-label="放大"><svg class="i18"><use href="#zoomin"/></svg></button>
          <button aria-label="缩小"><svg class="i18"><use href="#zoomout"/></svg></button>
          <button aria-label="重画"><svg class="i18"><use href="#repaint"/></svg></button>
          <button class="more" aria-label="显示样式"><svg class="i18"><use href="#shade"/></svg></button>
          <button class="more ab" aria-label="已保存方向"><svg class="i18"><use href="#views"/></svg><span>AB</span></button>
          <button aria-label="视图管理器"><svg class="i18"><use href="#camera"/></svg></button>
          <button class="more" aria-label="基准显示"><svg class="i18"><use href="#datums"/></svg></button>
          <button class="on" aria-label="注释显示"><svg class="i18"><use href="#notes"/></svg></button>
          <button class="on" aria-label="旋转中心"><svg class="i18"><use href="#spin"/></svg></button>
        </div>
      </div>
      <svg class="model" viewBox="256 169 1180 671" role="img" aria-label="零件模型">
        <defs>
          <linearGradient id="body" gradientUnits="userSpaceOnUse" x1="-170" y1="0" x2="170" y2="0">
            <stop offset="0" stop-color="#46494d"/><stop offset=".1" stop-color="#3b3f42"/><stop offset=".22" stop-color="#4c5053"/><stop offset=".34" stop-color="#5b5e66"/><stop offset=".54" stop-color="#666d72"/><stop offset=".66" stop-color="#666c71"/><stop offset=".85" stop-color="#5a5e65"/><stop offset=".94" stop-color="#505459"/><stop offset="1" stop-color="#414549"/>
          </linearGradient>
          <linearGradient id="bore" gradientUnits="userSpaceOnUse" x1="-82" y1="0" x2="82" y2="0">
            <stop offset="0" stop-color="#50545a"/><stop offset=".15" stop-color="#5b5f66"/><stop offset=".42" stop-color="#666c71"/><stop offset=".65" stop-color="#5b5e66"/><stop offset=".85" stop-color="#3f4346"/><stop offset="1" stop-color="#43474a"/>
          </linearGradient>
        </defs>
        <g transform="translate(599.500 411) rotate(-40.600)" shape-rendering="crispEdges">
          <path d="M-169.500 0V309A169.500 65.300 0 0 0 169.500 309V0z" fill="url(#body)"/>
          <ellipse rx="169.500" ry="65.300" fill="#a6b1bc"/>
          <ellipse rx="82" ry="31.600" fill="url(#bore)"/>
        </g>
        <g fill="none" stroke="#ffff2e" shape-rendering="crispEdges">
          <path d="M683.500 287.500L888 525 717 769.500 512.500 531.500z"/>
          <path d="M490 425.500L706 393.500 910 631.500 695 663.500z"/>
          <path d="M678 421.500L893.500 390 723 635 507 667z"/>
        </g>
        <path d="M700 528l-12-13" stroke="#ffff2e"/><path d="M700 528l12-2" stroke="#e01010"/><path d="M700 528l-10 14" stroke="#20e8e8"/>
        <circle cx="688" cy="514.500" r="2.500" fill="#f5f520"/><circle cx="712.500" cy="526.500" r="3" fill="#e80808"/><circle cx="690" cy="542.500" r="2.700" fill="#20e8e8"/>
      </svg>
    </section>
  </main>

  <footer class="status">
    <div class="toggles">
      <button class="tog on" aria-label="模型树显示"><svg class="treeicon"><use href="#tree"/></svg></button>
      <button class="tog" aria-label="浏览器显示"><svg class="i18"><use href="#globe"/></svg></button>
    </div>
    <div class="messages">
      <p>零件PRT0001中行2:在质量属性计算之后模型作了修改。可能需要重新计算。</p>
      <p class="note">从上次重新生成起零件'PRT0001'未被更改。</p>
    </div>
    <div class="tools">
      <span class="cell empty"></span>
      <span class="cell lamp"><i></i><b></b><i></i></span>
      <span class="cell"><button class="find" aria-label="查找"><svg class="i16"><use href="#binoc"/></svg></button></span>
      <span class="cell last"></span>
      <select class="filter" aria-label="选择过滤器"><option>智能</option></select>
    </div>
  </footer>
  <div class="taskedge"></div>

  <div class="annotation">
    <span class="callout">黄色提醒标志</span>
    <svg class="ink" viewBox="0 0 150 300"><g fill="none" stroke="#d42436" stroke-width="1.800"><circle cx="92.500" cy="254" r="52"/><path d="M53 8L66 249M60 241l6 10 5-11"/></g></svg>
  </div>
  <div class="watermark">三维网www.3dportal.cn</div>
</div>
</body>
</html>
```
FILE: styles.css
```css
* { box-sizing: border-box; }
body {
  margin: 0;
  font: 11px/16px "Noto Sans", "Noto Sans CJK SC", sans-serif;
  color: #444;
  background: #fcfcfc;
}
button { font: inherit; color: inherit; background: none; border: 0; padding: 0; margin: 0; white-space: nowrap; }
h1, h2, p, ul { margin: 0; padding: 0; font-weight: normal; list-style: none; }
svg { display: block; flex: none; }
.sprite { position: absolute; width: 0; height: 0; }
.i10 { width: 10px; height: 10px; }
.i12 { width: 12px; height: 12px; }
.i14 { width: 14px; height: 14px; }
.i16 { width: 16px; height: 16px; }
.i18 { width: 18px; height: 18px; }
.i20 { width: 20px; height: 20px; }
.i32 { width: 32px; height: 32px; }
.caret { width: 8px; height: 6px; }
.off { color: #a0a2a4; }

.app { position: relative; display: flex; flex-direction: column; min-height: 100vh; overflow: hidden; }

.titlebar { position: relative; display: flex; align-items: center; height: 32px; padding: 0 8px; }
.backdrop-window { position: absolute; top: -8px; left: 375px; width: 298px; height: 12px; background: #a5cde6; border: 1px solid #376e8c; border-radius: 4px; }
.quick { display: flex; align-items: center; }
.qbtn { display: flex; justify-content: center; align-items: center; width: 24px; height: 24px; }
.qdrop { display: flex; justify-content: center; width: 14px; }
.qsep { width: 1px; height: 24px; margin-right: 2px; background: #c6c9cc; }
.title { flex: 1; padding-right: 8px; text-align: center; font: 700 13px/16px "Liberation Sans", "Noto Sans CJK SC", sans-serif; color: #333; }
.wincontrols { display: flex; justify-content: flex-end; gap: 15px; padding-right: 2px; }

.tabbar { position: relative; z-index: 1; display: flex; align-items: flex-end; height: 28px; margin-bottom: -1px; padding: 0 8px 0 4px; font-size: 12px; }
.filetab, .tab { height: 24px; color: #6b6c70; background: #eeeff1; border: 1px solid #c6c9cc; font-weight: 500; }
.filetab { display: flex; align-items: center; gap: 2px; width: 49px; padding-left: 7px; margin-right: 8px; }
.tabs { display: flex; align-items: flex-end; flex: 1; }
.tab { padding: 0 11px; border-left: 0; border-right-color: #dcdee0; }
.tab:last-child { border-right-color: #c6c9cc; }
.tab.active { height: 28px; padding: 4px 10px 0 11px; color: #222; font-weight: 600; background: #fcfcfc; border: 1px solid #c6c9cc; border-bottom-color: #fcfcfc; border-radius: 2px 2px 0 0; }
.helpers { display: flex; align-items: center; gap: 8px; height: 32px; }
.help { width: 16px; height: 16px; border-radius: 50%; background: #333; color: #fff; font-weight: 700; font-size: 13px; line-height: 16px; }

.ribbon { display: flex; margin: 0 4px; border: 1px solid #c6c9cc; }
.group { display: flex; flex-direction: column; flex: none; border-right: 1px solid #cfd1d4; }
.g-ops { width: 123px; }
.g-data { width: 101px; }
.g-datum { width: 148px; }
.g-shape { width: 119px; }
.g-eng { width: 146px; }
.g-edit { width: 214px; }
.g-surf { width: 120px; }
.g-intent { width: 67px; }
.gbody { display: flex; height: 82px; }
.lead { padding-left: 7px; }
.center { justify-content: center; }
.gname { display: flex; justify-content: center; align-items: center; gap: 4px; height: 26px; padding-bottom: 2px; background: #eeeff1; border-top: 1px solid #c6c9cc; }
.big { display: flex; flex-direction: column; align-items: center; width: 59px; padding-top: 6px; line-height: 16px; }
.big span { display: flex; align-items: center; gap: 4px; margin-top: 6px; }
.big > .caret { margin-top: 4px; }
.big.narrow { width: 46px; }
.big.mid { width: 53px; }
.col { display: flex; flex-direction: column; padding-top: 1px; }
.c50 { width: 50px; }
.c54 { width: 54px; }
.c75 { width: 75px; }
.small { display: flex; align-items: center; gap: 4px; height: 26px; }
.small .caret { margin-left: 3px; }

.work { display: flex; flex: 1; margin-right: 4px; }
.side { display: flex; flex-direction: column; flex: 0 0 256px; padding: 13px 4px 11px; }
.sidetabs { position: relative; display: flex; height: 30px; margin-bottom: -1px; }
.stab { display: flex; align-items: center; justify-content: center; width: 31px; margin-right: -1px; background: #eeeff1; border: 1px solid #c6c9cc; }
.stab.active { width: 30px; background: #fcfcfc; border-bottom-color: #fcfcfc; }
.treeicon { width: 16px; height: 20px; color: #333; }
.panel { flex: 1; border: 1px solid #c6c9cc; border-right-width: 3px; border-bottom-width: 2px; }
.panelhead { display: flex; align-items: center; height: 29px; padding: 0 3px 0 20px; border-bottom: 1px solid #c6c9cc; }
.panelhead h2 { flex: 1; font-size: 11px; font-weight: 500; }
.panelhead button { display: flex; align-items: center; gap: 6px; margin-left: 8px; }
.modeltree { font-size: 12px; line-height: 20px; }
.modeltree li { display: flex; align-items: center; gap: 4px; height: 20px; padding-left: 8px; }
.modeltree li.root { padding-left: 5px; }
.modeltree .i16 { margin-left: -1px; }
.modeltree .pad { padding: 2px; }
.twist { width: 12px; height: 10px; }
.twist.closed::before { content: ""; display: block; width: 0; height: 0; margin-left: 2px; border: 5px solid transparent; border-left: 7px solid #888; border-right: 0; }

.viewport { position: relative; flex: 1; min-width: 0; background: linear-gradient(#005a9c, #00508c 18%, #003462 55%, #001c46 80%, #00102f); }
.model { width: 100%; height: 100%; }
.viewtools { position: absolute; top: 7px; left: 0; right: 4px; display: flex; justify-content: center; }
.vbar { display: flex; width: 284px; height: 28px; padding: 0 4px 0 5px; border: 1px solid #c6d3dc; background: #eeeff1; }
.vbar button { position: relative; display: flex; flex: 1; align-items: center; justify-content: center; background: #fcfcfc; border-left: 1px solid #c6c9cc; }
.vbar button.on { background: #d9dce0; border: 1px solid #a6a9ad; }
.vbar .more::after { content: ""; position: absolute; right: 2px; bottom: 3px; border: 2px solid transparent; border-right-color: #333; border-bottom-color: #333; }
.vbar .ab span { position: absolute; top: 3px; right: 4px; font: 700 9px/12px "Liberation Mono", monospace; }

.status { display: flex; height: 58px; background: #eeeff1; border-top: 2px solid #999a9e; }
.toggles { display: flex; align-items: flex-end; gap: 4px; width: 65px; height: 54px; padding-left: 6px; }
.tog { display: flex; align-items: center; justify-content: center; width: 22px; height: 22px; border: 1px solid #c6c9cc; }
.tog.on { background: #dfe1e5; border-color: #a6a9ad; }
.messages { flex: 1; padding: 7px 0 0 16px; }
.messages .note::before { content: ""; display: inline-block; width: 5px; height: 5px; margin: 0 5px 2px -10px; border-radius: 50%; background: #0a18c8; vertical-align: middle; }
.messages p { padding-left: 2px; }
.messages p.note { padding-left: 0; }
.tools { display: flex; align-items: flex-end; height: 54px; padding-right: 18px; }
.cell { display: flex; align-items: center; justify-content: center; height: 25px; border-left: 1px solid #d2d4d6; }
.empty { width: 37px; }
.lamp { width: 32px; gap: 2px; }
.lamp i { width: 6px; height: 6px; border-radius: 50%; background: #c9cbcd; }
.lamp b { width: 11px; height: 11px; border-radius: 50%; background: #ffff00; }
.find { display: flex; align-items: center; justify-content: center; width: 40px; height: 23px; margin: 0 3px 0 2px; background: #f4f4f5; border: 1px solid #b9bcbf; border-radius: 2px; }
.last { width: 97px; }
.filter { appearance: none; width: 154px; height: 24px; padding: 0 6px; font: inherit; color: #444; border: 1px solid #c6c9cc; border-radius: 0; background: linear-gradient(90deg, transparent 139px, #c6c9cc 139px, #c6c9cc 140px, #eeeff1 140px) #f4f5f6; }
.taskedge { height: 2px; border-top: 1px solid #555b45; background: #e4e6dc; }

.annotation { position: absolute; right: 250px; bottom: 0; width: 150px; height: 300px; }
.ink { position: absolute; top: 0; left: 0; width: 150px; height: 300px; }
.callout { position: absolute; top: -20px; left: 7px; font-size: 16px; font-weight: 300; line-height: 24px; color: #d42436; white-space: nowrap; }
.watermark { position: absolute; right: 19px; bottom: 4px; font: 700 16px/18px "DejaVu Sans", "Noto Sans CJK SC", sans-serif; color: #fff; -webkit-text-stroke: 2px #e22a2a; paint-order: stroke fill; white-space: nowrap; }
```
